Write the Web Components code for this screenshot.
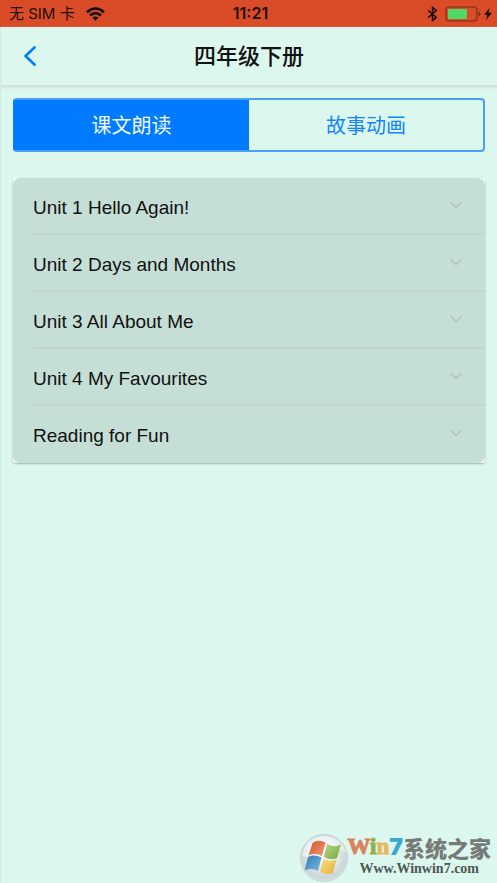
<!DOCTYPE html>
<html lang="zh-CN">
<head>
<meta charset="utf-8">
<meta name="viewport" content="width=device-width, initial-scale=1">
<title>四年级下册</title>
<style>
html { height: 100%; }
body { margin: 0; min-height: 100%; background: #dcf7ed; color: #111; font-family: "Liberation Sans", "Noto Sans CJK SC", sans-serif; }
</style>
</head>
<body>
<book-screen>
  <status-bar slot="status" carrier="无 SIM 卡" time="11:21"></status-bar>
  <nav-header slot="header">四年级下册</nav-header>
  <segment-control>
    <segment-button selected>课文朗读</segment-button>
    <segment-button>故事动画</segment-button>
  </segment-control>
  <unit-list>
    <unit-row>Unit 1 Hello Again!</unit-row>
    <unit-row>Unit 2 Days and Months</unit-row>
    <unit-row>Unit 3 All About Me</unit-row>
    <unit-row>Unit 4 My Favourites</unit-row>
    <unit-row last>Reading for Fun</unit-row>
  </unit-list>
  <site-mark slot="footer"></site-mark>
</book-screen>
<script>
function define(name, html, setup) {
  const template = document.createElement('template');
  template.innerHTML = html;
  customElements.define(name, class extends HTMLElement {
    constructor() {
      super();
      this.attachShadow({ mode: 'open' }).append(template.content.cloneNode(true));
    }
    connectedCallback() { if (setup) setup(this, this.shadowRoot); }
  });
}

define('book-screen', `
<style>
:host { display: flex; flex-direction: column; min-height: 100vh; box-sizing: border-box; border-left: 1px solid #d0ebe1; }
main { flex: 1; display: flex; flex-direction: column; gap: 26px; padding: 11px 12px 20px; }
</style>
<slot name="status"></slot>
<slot name="header"></slot>
<main><slot></slot></main>
<slot name="footer"></slot>`);

define('status-bar', `
<style>
:host { display: grid; grid-template-columns: 1fr auto 1fr; align-items: center; height: 27px; margin-left: -1px; padding: 0 5px 0 9px; box-sizing: border-box; background: #d94c27; color: #1c0d08; font: 15px/27px Inter, "Noto Sans CJK SC", sans-serif; }
.left { display: flex; align-items: center; gap: 11px; }
.right { display: flex; align-items: center; justify-content: flex-end; }
time { font-size: 16px; font-weight: 600; }
svg { display: block; }
.bt { margin-right: 7px; }
.bolt { margin-left: 3px; }
</style>
<div class="left"><span id="carrier"></span>
<svg width="19" height="14" viewBox="0 0 19 14" aria-label="Wi-Fi"><g fill="none" stroke="#120806" stroke-width="2.6"><path d="M1 5.2Q9.5-2.2 18 5.2"/><path d="M4 8.5Q9.5 3.8 15 8.5"/></g><path d="M6.4 10.6Q9.5 8.2 12.6 10.6L9.5 13.8Z" fill="#120806"/></svg></div>
<time id="time"></time>
<div class="right">
<svg class="bt" width="11" height="16" viewBox="0 0 11 16" aria-label="Bluetooth"><path d="M1.2 4.4 9.3 11.4 5.5 14.6V1.4L9.3 4.6 1.2 11.6" fill="none" stroke="#1c0d08" stroke-width="1.5"/></svg>
<svg width="36" height="16" viewBox="0 0 36 16" aria-label="Battery"><rect x="1" y="1" width="31" height="14" rx="3" fill="none" stroke="#98351b" stroke-width="1.7"/><rect x="3" y="3" width="19" height="10" rx="1" fill="#4cd964"/><path d="M33.6 5.6Q35.5 6 35.5 8T33.6 10.4Z" fill="#7c2b16"/></svg>
<svg class="bolt" width="8" height="12" viewBox="0 0 8 12" aria-label="Charging"><path d="M5.6 0 0 6.8H3.4L2 12 8 4.8H4.5Z" fill="#1c0d08"/></svg>
</div>`, (host, root) => {
  root.getElementById('carrier').textContent = host.getAttribute('carrier');
  root.getElementById('time').textContent = host.getAttribute('time');
});

define('nav-header', `
<style>
:host { display: block; }
header { display: grid; grid-template-columns: 60px 1fr 60px; align-items: center; height: 60px; box-sizing: border-box; border-bottom: 2px solid #d3e1da; box-shadow: 0 1px 2px #d3e6de; }
h1 { margin: 0; padding-top: 2px; text-align: center; font: 500 22px/32px "Liberation Sans", "Noto Sans CJK SC", sans-serif; color: #111; }
button { display: flex; align-items: center; width: 60px; height: 56px; border: 0; padding: 0 0 0 22px; background: none; }
</style>
<header><button aria-label="返回"><svg width="14" height="20" viewBox="0 0 14 20"><path d="M11.5 1.5 2.5 10 11.5 18.5" fill="none" stroke="#087cff" stroke-width="2.7" stroke-linecap="round" stroke-linejoin="round"/></svg></button><h1><slot></slot></h1></header>`);

define('segment-control', `
<style>
:host { display: grid; grid-template-columns: 1fr 1fr; border: 2px solid #4a9ffa; border-left-color: #007aff; border-radius: 4px; }
</style>
<slot></slot>`);

define('segment-button', `
<style>
:host { display: block; color: #1284fc; }
:host([selected]) { background: #007aff; color: #eef8ff; border-right: 1px solid #007aff; }
button { display: block; width: 100%; height: 50px; padding: 0; border: 0; background: none; color: inherit; font: 20px/50px "Noto Sans CJK SC", sans-serif; }
</style>
<button><slot></slot></button>`, (host, root) => {
  root.querySelector('button').setAttribute('aria-pressed', host.hasAttribute('selected'));
});

define('unit-list', `
<style>
:host { display: block; background: #fff; border-radius: 3px; box-shadow: 0 1px 2px #9eb5ac; }
div { border-radius: 7px; overflow: hidden; background: #c5dfd7; }
</style>
<div role="list"><slot></slot></div>`);

define('unit-row', `
<style>
:host { display: block; padding-left: 20px; }
button { display: flex; align-items: center; justify-content: space-between; width: 100%; height: 57px; box-sizing: border-box; padding: 4px 22px 0 0; border: 0; border-bottom: 2px solid #c4d4ce; background: none; color: #111; font: 19px/24px "Liberation Sans", sans-serif; text-align: left; }
:host([last]) button { border-bottom-color: transparent; }
svg { display: block; margin-bottom: 6px; }
</style>
<button aria-expanded="false"><span><slot></slot></span><svg width="14" height="8" viewBox="0 0 14 8"><path d="M1.5 1 7 6.5 12.5 1" fill="none" stroke="#b7c4c0" stroke-width="1.6"/></svg></button>`, host => host.setAttribute('role', 'listitem'));

define('site-mark', `
<style>
:host { display: flex; justify-content: flex-end; align-items: center; padding-right: 6px; }
svg { display: block; }
.words { display: flex; flex-direction: column; align-items: center; }
.name { display: flex; align-items: center; height: 26px; color: #747b78; font: 900 22px/26px "Noto Sans CJK SC", sans-serif; white-space: nowrap; }
.latin { font: 700 23px/26px "Liberation Serif", serif; -webkit-text-stroke: 1px currentColor; }
.w { color: #d9845c; } .i { color: #8fae48; } .n { color: #e5b95c; } .seven { color: #38a8d4; font: 900 23px/26px Inter, sans-serif; }
.url { height: 22px; font: 700 14px/18px "Liberation Serif", serif; color: #4c5854; }
</style>
<svg width="48" height="50" viewBox="0 0 48 50" aria-label="Windows">
<defs>
<radialGradient id="orb" cx=".5" cy=".45" r=".55"><stop offset="0" stop-color="#fff"/><stop offset=".5" stop-color="#e6eeef"/><stop offset=".86" stop-color="#c8d5d9"/><stop offset="1" stop-color="#dce7e8"/></radialGradient>
<linearGradient id="r" x2="1" y2="1"><stop stop-color="#d5522f"/><stop offset="1" stop-color="#eb9c78"/></linearGradient>
<linearGradient id="g" x2="1" y2="1"><stop stop-color="#bdd38a"/><stop offset="1" stop-color="#77aa37"/></linearGradient>
<linearGradient id="b" x2="1" y2="1"><stop stop-color="#2f78b5"/><stop offset="1" stop-color="#7cbce2"/></linearGradient>
<linearGradient id="y" x2="1" y2="1"><stop stop-color="#f5e08a"/><stop offset="1" stop-color="#e3b23d"/></linearGradient>
</defs>
<circle cx="24" cy="25" r="23.5" fill="url(#orb)" stroke="#c6d4d5"/>
<path d="M2 23C4 9 13 3 24 3S43 9 46 19C32 13 17 26 2 23Z" fill="#fff" opacity=".5"/>
<path d="M12.5 10Q18.5 6 25.5 9.5L22 23Q15.5 19.5 8.5 22.5Z" fill="url(#r)"/>
<path d="M27 11Q33.5 15 41 11.5L37 25Q30.5 28 23.8 24Z" fill="url(#g)"/>
<path d="M8 24Q15 21 21.5 24.5L18 38Q11.5 34.5 4.5 37.5Z" fill="url(#b)"/>
<path d="M23.3 25.5Q30 29.5 36.5 26.5L33 40Q26 43 19.8 39Z" fill="url(#y)"/>
</svg>
<div class="words"><div class="name"><span class="latin"><span class="w">W</span><span class="i">i</span><span class="n">n</span></span><span class="seven">7</span><span>系统之家</span></div><div class="url">Www.Winwin7.com</div></div>`);
</script>
</body>
</html>
